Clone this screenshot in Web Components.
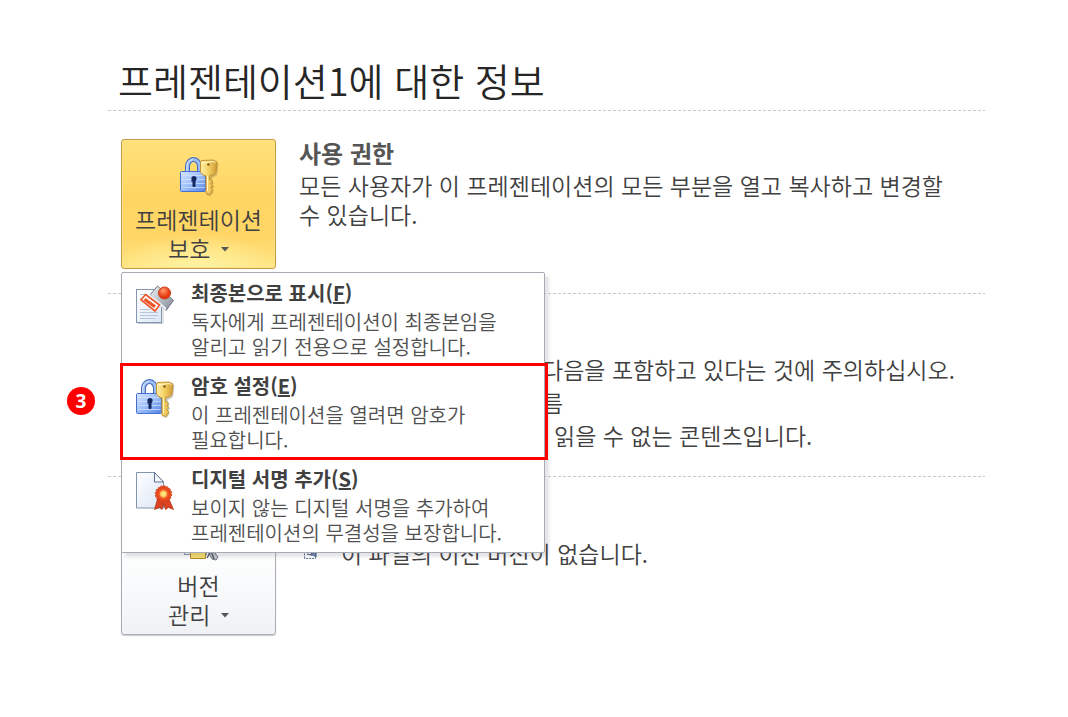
<!DOCTYPE html>
<html lang="ko">
<head>
<meta charset="utf-8">
<title>프레젠테이션1에 대한 정보</title>
<style>
  body { margin: 0; background: #fff; color: #404040; font-family: "Noto Sans CJK KR", "Noto Sans", sans-serif; }
</style>
</head>
<body>
<info-page>
  <span slot="title">프레젠테이션1에 대한 정보</span>

  <info-section>
    <big-button slot="action" tone="gold">
      <info-icon slot="icon" name="lock"></info-icon>
      프레젠테이션<br>보호
    </big-button>
    <action-menu slot="menu">
      <menu-entry icon="final">
        <span slot="title">최종본으로 표시(<u>F</u>)</span>
        독자에게 프레젠테이션이 최종본임을<br>알리고 읽기 전용으로 설정합니다.
      </menu-entry>
      <menu-entry icon="lock">
        <span slot="title">암호 설정(<u>E</u>)</span>
        이 프레젠테이션을 열려면 암호가<br>필요합니다.
        <step-callout slot="callout">3</step-callout>
      </menu-entry>
      <menu-entry icon="sign">
        <span slot="title">디지털 서명 추가(<u>S</u>)</span>
        보이지 않는 디지털 서명을 추가하여<br>프레젠테이션의 무결성을 보장합니다.
      </menu-entry>
    </action-menu>
    <span slot="heading">사용 권한</span>
    모든 사용자가 이 프레젠테이션의 모든 부분을 열고 복사하고 변경할 수 있습니다.
  </info-section>

  <info-section>
    <share-notes>
      <span slot="lead">다음을 포함하고 있다는 것에 주의하십시오.</span>
      <span slot="first">름</span>
      <span slot="second">읽을 수 없는 콘텐츠입니다.</span>
    </share-notes>
  </info-section>

  <info-section>
    <big-button slot="action">
      <info-icon slot="icon" name="versions"></info-icon>
      버전<br>관리
    </big-button>
    <version-note>이 파일의 이전 버전이 없습니다.</version-note>
  </info-section>
</info-page>

<script>
const define = (name, html, setup) => {
  const template = document.createElement('template');
  template.innerHTML = html;
  customElements.define(name, class extends HTMLElement {
    constructor() {
      super();
      this.attachShadow({ mode: 'open' }).append(template.content.cloneNode(true));
    }
    connectedCallback() { if (setup) setup(this, this.shadowRoot); }
  });
};

const ICONS = {
  lock: `
    <defs>
      <linearGradient id="b" x1="0" x2="1" y1="0" y2="1"><stop offset="0" stop-color="#d5e5ff"/><stop offset=".5" stop-color="#9dbffb"/><stop offset="1" stop-color="#5482e2"/></linearGradient>
      <linearGradient id="k" x1="0" x2="1"><stop offset="0" stop-color="#fff0a8"/><stop offset=".5" stop-color="#f3cf62"/><stop offset="1" stop-color="#cf9a34"/></linearGradient>
    </defs>
    <path d="M8.500 16V10.500a6 7 0 0 1 12 0V16" fill="none" stroke="#3f68bd" stroke-width="5"/>
    <path d="M8.500 16V10.500a6 7 0 0 1 12 0V16" fill="none" stroke="#9dbcf4" stroke-width="3"/>
    <path d="M7.800 15V10.500a7 7 0 0 1 6-7" fill="none" stroke="#e3eeff" stroke-width="1"/>
    <rect x="1.500" y="15.500" width="25" height="20" rx="1" fill="url(#b)" stroke="#4670cf"/>
    <path d="M2.500 19.500h23M2.500 23.500h23M2.500 27.500h23M2.500 31.500h23" stroke="#d3e2ff" opacity=".75"/>
    <circle cx="15" cy="22.500" r="2.600" fill="#14295f"/>
    <path d="M12.500 25l1.500-1h2v6.500h-2V25z" fill="#14295f" stroke="#14295f"/>
    <path d="M24 8l13-2 2.500 2-1.500 11-5 3v4l2 1-2 2 2.500 2-2.500 2 1.500 3-3 4-4-1-1-17-3-3z" fill="#5b513c" opacity=".3"/>
    <path d="M21.500 6.500L22.500 4.500 34 4l4 2-1 10-2 2.500-4.500 1v4l3.500 2-2.500 2 2.500 2-2.500 2 2.500 2.500-3 4.500-4-1.500V20L23.500 18.500 21.500 16z" fill="url(#k)" stroke="#c49433"/>
    <path d="M23 7l11-1.500 2.500 1M28.500 20v15" fill="none" stroke="#fff7ca"/>
    <circle cx="29.500" cy="8.500" r="1.300" fill="#7d5a18"/>`,
  final: `
    <defs>
      <linearGradient id="p" x1="0" x2="1" y1="0" y2="1"><stop offset="0" stop-color="#fff"/><stop offset="1" stop-color="#dbe6f4"/></linearGradient>
      <linearGradient id="s" x1="0" x2="1" y1="0" y2="1"><stop offset="0" stop-color="#f1f3f6"/><stop offset="1" stop-color="#7c8693"/></linearGradient>
      <radialGradient id="r" cx=".4" cy=".3"><stop offset="0" stop-color="#ff9a68"/><stop offset="1" stop-color="#e63c14"/></radialGradient>
    </defs>
    <path d="M3 38.500h25V14" fill="none" stroke="#c4c8d0"/>
    <rect x="1.500" y="4.500" width="25" height="33" fill="url(#p)" stroke="#8797b0"/>
    <path d="M5 9.500h6M5 13.500h2M5 24.500h10M5 27.500h18M5 30.500h18M5 33.500h15" stroke="#b5c5dc"/>
    <path d="M15.500 9.500L22.500 1 38.500 15.500 31 25.500z" fill="url(#s)" stroke="#6f7885"/>
    <path d="M15.500 9.500L31 22.500v3L15.500 13z" fill="#e9edf2"/>
    <path d="M10.500 9.500l14 10.500-4.500 6L6 15z" fill="#fff" stroke="#ee5527" stroke-width="1.600"/>
    <path d="M10.500 13l10.500 7.500-2 2.500L8.500 15.500z" fill="#ee5527"/>
    <circle cx="29.500" cy="8" r="6" fill="url(#r)" stroke="#c9391a"/>`,
  sign: `
    <defs>
      <linearGradient id="d" x1="0" x2="1" y1="0" y2="1"><stop offset="0" stop-color="#fff"/><stop offset="1" stop-color="#d9e5f5"/></linearGradient>
      <radialGradient id="m" cx=".5" cy=".5"><stop offset=".2" stop-color="#ffe680"/><stop offset=".45" stop-color="#fbae45"/><stop offset=".55" stop-color="#ee5a2a"/><stop offset="1" stop-color="#e23e14"/></radialGradient>
    </defs>
    <path d="M1.500 1.500h18l9 9.500v26h-27z" fill="url(#d)" stroke="#8293ad"/>
    <path d="M19.500 1.500v9.500h9z" fill="#f5f9ff" stroke="#5f718e"/>
    <path d="M22.500 28L19.500 38.500l5-2 2.500 2 1.500-6 2 6 3-2 5 2-4.500-10.500z" fill="#d94320" stroke="#ad2e12" stroke-width=".7"/>
    <circle cx="28.500" cy="23" r="7.500" fill="url(#m)" stroke="#e0421a"/>
    <circle cx="28.500" cy="23" r="8.200" fill="none" stroke="#d43c16" stroke-dasharray="2 1.200"/>`,
  versions: `
    <rect x="5.500" y="4.500" width="22" height="28" fill="#f7f9fc" stroke="#8695ac"/>
    <path d="M11.500 20.500h15v16h-15z" fill="#f9de6c" stroke="#ae8c28"/>
    <path d="M27 26l3-3 9 12-2 3-4-1z" fill="#c4c7cf" stroke="#6d717c"/>
    <path d="M28 36l4-7 3 8" fill="none" stroke="#575c69" stroke-width="1.500"/>`,
  file: `
    <path d="M3.500 15.500v-13h7l4 4v9z" fill="#fff" stroke="#5b6d92" stroke-dasharray="2 1"/>
    <path d="M6 11l5 1-1-4 5 1v5" fill="#6f86b4" stroke="#374e80"/>`
};

define('info-icon', `
  <style>
    :host { display: block; width: 40px; height: 40px; }
    svg { display: block; width: 100%; height: 100%; }
  </style>
  <div></div>`, (host, root) => {
  const name = host.getAttribute('name');
  const box = name === 'file' ? 18 : 40;
  root.querySelector('div').innerHTML = `<svg viewBox="0 0 ${box} ${box}" aria-hidden="true">${ICONS[name]}</svg>`;
});

define('info-page', `
  <style>
    :host { display: block; padding: 50px 83px 40px 108px; }
    h1 { margin: 0; padding: 0 0 0 10px; font-size: 38px; line-height: 60px; font-weight: 350; color: #262626; }
  </style>
  <main><h1><slot name="title"></slot></h1><slot></slot></main>`);

define('info-section', `
  <style>
    :host { display: block; min-height: 154px; padding: 29px 0 0 13px;
      background: repeating-linear-gradient(90deg, #c9c9c9 0 3px, transparent 3px 5px) top / 100% 1px no-repeat; }
    section { display: grid; grid-template-columns: 155px 1fr; column-gap: 23px; }
    .action { position: relative; }
    h2 { margin: 0; font-size: 24px; line-height: 28px; font-weight: 700; color: #555; }
    h2:not(.on) { display: none; }
    .body { font-size: 23px; line-height: 29px; font-weight: 350; }
    .on + .body { padding: 4px 24px 0 0; }
    slot[name="menu"] { display: block; position: absolute; top: 133px; left: 0; z-index: 1; }
  </style>
  <section>
    <div class="action"><slot name="action"></slot><slot name="menu"></slot></div>
    <div><h2><slot name="heading"></slot></h2><div class="body"><slot></slot></div></div>
  </section>`, (host, root) => {
  root.querySelector('h2').classList.toggle('on', !!host.querySelector('[slot="heading"]'));
});

define('big-button', `
  <style>
    :host { display: block; }
    button { display: flex; flex-direction: column; align-items: center; width: 100%; height: 130px; margin: 0;
      padding: 16px 0 0; border: 1px solid #a9adb4; border-radius: 3px; box-shadow: 0 1px 1px #c9ccd1;
      background: linear-gradient(#fff, #fafbfc 60%, #eff1f4); color: #404040; font: 350 23px/29px "Noto Sans CJK KR", sans-serif; }
    :host([tone="gold"]) button { border-color: #c99a45; box-shadow: inset 0 0 0 1px #ffe28c;
      background: radial-gradient(ellipse 84px 34px at 50% 100%, #fff3a4, #fff3a400), linear-gradient(#ffe27b, #ffd562 45%, #ffd566 75%, #ffe583); }
    .label { display: block; margin-top: 9px; text-align: center; }
    svg { width: 8px; height: 5px; margin: 0 0 6px 4px; }
  </style>
  <button type="button" aria-haspopup="menu">
    <slot name="icon"></slot>
    <span class="label"><slot></slot><svg viewBox="0 0 8 5" aria-hidden="true"><path d="M0 0h8L4 4.500z" fill="#555"/></svg></span>
  </button>`);

define('action-menu', `
  <style>
    :host { display: block; box-sizing: border-box; width: 424px; border: 1px solid #a7abb3; border-radius: 2px;
      background: #fff; box-shadow: 4px 4px 3px #50506426; }
  </style>
  <div role="menu"><slot></slot></div>`);

define('menu-entry', `
  <style>
    :host { display: block; position: relative; }
    button { display: flex; gap: 16px; width: 100%; height: 93px; margin: 0; padding: 4px 0 0 13px; border: 0;
      background: none; text-align: left; color: #505050; font: 350 20px/25px "Noto Sans CJK KR", sans-serif; }
    info-icon { flex: none; margin-top: 8px; }
    strong { display: block; font-size: 20px; line-height: 32px; font-weight: 700; color: #404040; }
    .text { display: block; }
  </style>
  <button type="button" role="menuitem">
    <info-icon></info-icon>
    <span class="text"><strong><slot name="title"></slot></strong><slot></slot></span>
  </button>
  <slot name="callout"></slot>`, (host, root) => {
  const old = root.querySelector('info-icon');
  const icon = document.createElement('info-icon');
  icon.setAttribute('name', host.getAttribute('icon'));
  old.replaceWith(icon);
});

define('step-callout', `
  <style>
    :host { display: block; position: absolute; inset: -3px -4px -1px -2px; border: 3px solid #f00; pointer-events: none; }
    span { position: absolute; left: -56px; top: 21px; width: 28px; height: 28px; border-radius: 50%; background: #f00;
      color: #fff; font: 700 19px/28px "Open Sans", sans-serif; text-align: center; }
  </style>
  <span><slot></slot></span>`);

define('share-notes', `
  <style>
    :host { display: block; padding: 31px 0 0 243px; line-height: 33px; }
    p, ul { margin: 0; padding: 0; list-style: none; white-space: nowrap; }
    li + li { padding-left: 12px; }
  </style>
  <p><slot name="lead"></slot></p>
  <ul><li><slot name="first"></slot></li><li><slot name="second"></slot></li></ul>`);

define('version-note', `
  <style>
    :host { display: flex; gap: 22px; padding: 34px 0 0 2px; }
    info-icon { width: 18px; height: 18px; margin-top: 4px; }
  </style>
  <info-icon name="file"></info-icon><span><slot></slot></span>`);
</script>
</body>
</html>
